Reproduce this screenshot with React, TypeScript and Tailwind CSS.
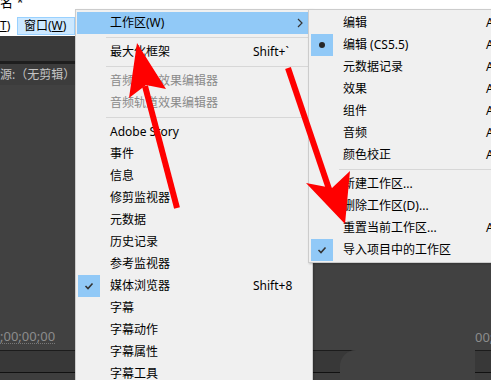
import React from "react";
import clsx from "clsx";

type Mark = "check" | "dot" | undefined;

interface RowProps {
  label: string;
  shortcut?: string;
  mark?: Mark;
  disabled?: boolean;
  active?: boolean;
  submenu?: boolean;
}

const MenuRow: React.FC<RowProps> = ({ label, shortcut, mark, disabled, active, submenu }) => (
  <div className={clsx("flex h-[22px] items-center", active && "bg-[#91c9f7]")}>
    <div className="flex h-full w-[33px] shrink-0 items-center pl-[1px]">
      {mark && (
        <div className="flex h-[22px] w-[22px] items-center justify-center bg-[#91c9f7]">
          {mark === "dot" ? (
            <div className="h-[6px] w-[6px] rounded-full bg-[#262626]" />
          ) : (
            <svg width="10" height="8" viewBox="0 0 10 8">
              <path d="M1.5 4 L4 6.5 L8.5 1.5" fill="none" stroke="#333" strokeWidth="1.6" />
            </svg>
          )}
        </div>
      )}
    </div>
    <span className={clsx("w-[143px] shrink-0 whitespace-nowrap", disabled ? "text-[#8a8a8a]" : "text-black")}>
      {label}
    </span>
    {shortcut && <span className="whitespace-nowrap text-black">{shortcut}</span>}
    {submenu && (
      <svg className="ml-auto mr-[8px]" width="6" height="10" viewBox="0 0 6 10">
        <path d="M1 1 L5 5 L1 9" fill="none" stroke="#333" strokeWidth="1.2" />
      </svg>
    )}
  </div>
);

const Sep = () => <div className="my-[3px] ml-[29px] h-px bg-[#d7d7d7]" />;

export default function App() {
  return (
    <div className="relative h-[380px] w-[491px] overflow-hidden bg-white font-['Noto_Sans','Noto_Sans_CJK_SC',sans-serif] text-[12px]">
      {/* window title + menu bar */}
      <div className="h-[36px] overflow-hidden bg-white">
        <div className="-mt-[6px] h-[23px] whitespace-nowrap text-[13px] leading-[16px] text-black">名 *</div>
        <div className="flex h-[18px] items-center">
          <span className="w-[17px] text-black">
            <span className="underline">T</span>)
          </span>
          <div className="flex h-[18px] w-[58px] items-center border border-[#99d1ff] bg-[#cce8ff] pl-[6px] text-black">
            窗口(<span className="underline">W</span>)
          </div>
        </div>
      </div>

      {/* dark editor panels */}
      <div className="relative flex h-[344px] flex-col bg-[#414141]">
        <div className="h-[25px] bg-[#3a3a3a]" />
        <div className="h-[3px] bg-[#1e1e1e]" />
        <div className="flex h-[21px] items-center whitespace-nowrap bg-[#3c3c3c] text-[12px] text-[#c4c4c4]">
          源:（无剪辑）<span className="ml-[1px] h-[14px] w-px bg-[#777]" />
        </div>
        <div className="grid h-[265px] grid-cols-[auto_1fr_16px] items-end pb-[6px] text-[13px] text-[#8c8c8c]">
          <span className="border-b border-dotted border-[#777] leading-[14px]">;00;00;00</span>
          <span />
          <span className="overflow-hidden whitespace-nowrap leading-[14px]">00;00;00;00</span>
        </div>
        <div className="h-px bg-[#1c1c1c]" />
        <div className="h-[21px] bg-[#383838]" />
        <div className="h-px bg-[#111]" />
        <div className="flex-1 bg-[#3e3e3e]" />
        <div className="absolute left-[340px] top-[314px] h-[30px] w-[135px] rounded-tl-[16px] bg-[#414141]" />
      </div>

      {/* main menu */}
      <div className="absolute left-[75px] top-[9px] h-[380px] w-[238px] border border-[#cccccc] bg-[#f0f0f0] px-[1px] pt-[2px] shadow-[1px_1px_2px_rgba(0,0,0,0.2)]">
        <MenuRow label="工作区(W)" active submenu />
        <Sep />
        <MenuRow label="最大化框架" shortcut="Shift+`" />
        <Sep />
        <MenuRow label="音频剪辑效果编辑器" disabled />
        <MenuRow label="音频轨道效果编辑器" disabled />
        <Sep />
        <MenuRow label="Adobe Story" />
        <MenuRow label="事件" />
        <MenuRow label="信息" />
        <MenuRow label="修剪监视器" />
        <MenuRow label="元数据" />
        <MenuRow label="历史记录" />
        <MenuRow label="参考监视器" />
        <MenuRow label="媒体浏览器" shortcut="Shift+8" mark="check" />
        <MenuRow label="字幕" />
        <MenuRow label="字幕动作" />
        <MenuRow label="字幕属性" />
        <MenuRow label="字幕工具" />
      </div>

      {/* workspace submenu */}
      <div className="absolute left-[308px] top-[9px] h-[254px] w-[200px] border border-[#cccccc] bg-[#f0f0f0] px-[1px] pt-[2px] shadow-[1px_1px_2px_rgba(0,0,0,0.2)]">
        <MenuRow label="编辑" shortcut="Alt+Shift+1" />
        <MenuRow label="编辑 (CS5.5)" shortcut="Alt+Shift+2" mark="dot" />
        <MenuRow label="元数据记录" shortcut="Alt+Shift+3" />
        <MenuRow label="效果" shortcut="Alt+Shift+4" />
        <MenuRow label="组件" shortcut="Alt+Shift+5" />
        <MenuRow label="音频" shortcut="Alt+Shift+6" />
        <MenuRow label="颜色校正" shortcut="Alt+Shift+7" />
        <Sep />
        <MenuRow label="新建工作区..." />
        <MenuRow label="删除工作区(D)..." />
        <MenuRow label="重置当前工作区..." shortcut="Alt+Shift+0" />
        <MenuRow label="导入项目中的工作区" mark="check" />
      </div>

      {/* red annotation arrows */}
      <svg className="pointer-events-none absolute inset-0" width="491" height="380" viewBox="0 0 491 380">
        <line x1="177" y1="208" x2="145" y2="86" stroke="#ff0000" strokeWidth="6" />
        <polygon points="137,43 129,98 146,85 166,89" fill="#ff0000" />
        <line x1="288" y1="68" x2="330" y2="192" stroke="#ff0000" strokeWidth="6" />
        <polygon points="345,224 306,183 332,188 350,171" fill="#ff0000" />
      </svg>
    </div>
  );
}
